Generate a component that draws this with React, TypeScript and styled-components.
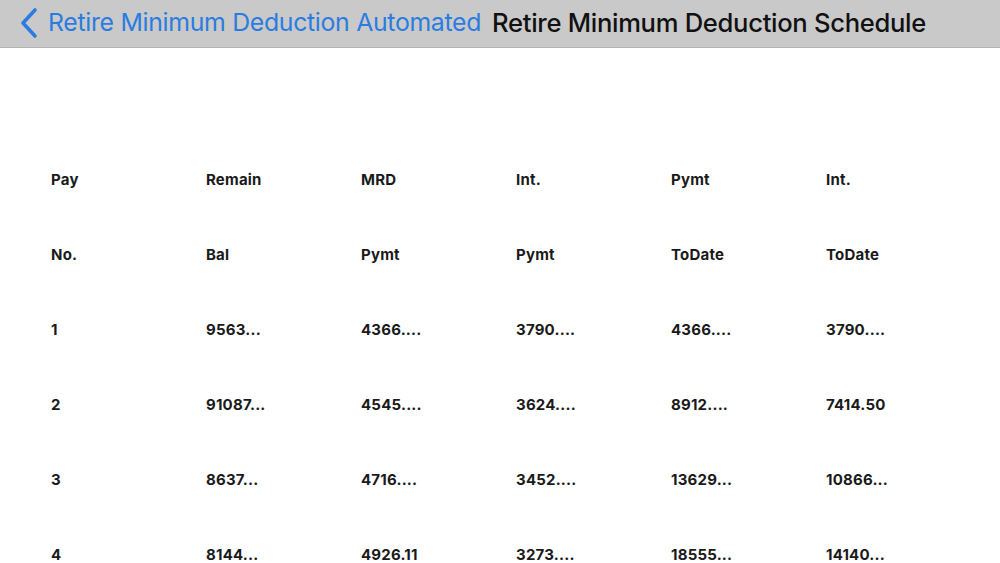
import React from "react";
import styled, { createGlobalStyle } from "styled-components";

const Global = createGlobalStyle`
  html, body { margin: 0; padding: 0; background: #ffffff; }
  body { font-family: Inter, "Noto Sans", sans-serif; width: 1000px; height: 563px; overflow: hidden; }
`;

const Page = styled.div`
  width: 1000px;
  height: 563px;
  display: flex;
  flex-direction: column;
  background: #ffffff;
  overflow: hidden;
`;

const NavBar = styled.header`
  height: 48px;
  flex: 0 0 48px;
  box-sizing: border-box;
  background: #c9c9c9;
  border-bottom: 1px solid #b4b4b4;
  display: flex;
  align-items: center;
  padding-left: 18px;
`;

const BackButton = styled.div`
  display: flex;
  align-items: center;
  gap: 8px;
  color: #2b7ce0;
  font-size: 24.8px;
  letter-spacing: -0.3px;
  line-height: 1;
  padding-bottom: 2px;
`;

const Title = styled.div`
  margin-left: 11px;
  color: #111111;
  font-size: 25.6px;
  font-weight: 500;
  letter-spacing: -0.3px;
  line-height: 1;
  padding-bottom: 2px;
`;

const Table = styled.div`
  display: grid;
  grid-template-columns: repeat(6, 155px);
  grid-auto-rows: 75px;
  padding: 94px 0 0 51px;
`;

const Cell = styled.div`
  display: flex;
  align-items: center;
  font-size: 15px;
  font-weight: 700;
  letter-spacing: 0.2px;
  color: #1a1a1a;
  white-space: nowrap;
`;

const header1 = ["Pay", "Remain", "MRD", "Int.", "Pymt", "Int."];
const header2 = ["No.", "Bal", "Pymt", "Pymt", "ToDate", "ToDate"];
const rows = [
  ["1", "9563...", "4366....", "3790....", "4366....", "3790...."],
  ["2", "91087...", "4545....", "3624....", "8912....", "7414.50"],
  ["3", "8637...", "4716....", "3452....", "13629...", "10866..."],
  ["4", "8144...", "4926.11", "3273....", "18555...", "14140..."],
];

export default function App() {
  const all = [header1, header2, ...rows];
  return (
    <Page>
      <Global />
      <NavBar>
        <BackButton>
          <svg width="22" height="32" viewBox="0 0 22 32" fill="none">
            <path d="M17 3 L5 16 L17 29" stroke="#2b7ce0" strokeWidth="3.6" strokeLinecap="round" strokeLinejoin="round" />
          </svg>
          <span>Retire Minimum Deduction Automated</span>
        </BackButton>
        <Title>Retire Minimum Deduction Schedule</Title>
      </NavBar>
      <Table>
        {all.map((r, i) => r.map((c, j) => <Cell key={`${i}-${j}`}>{c}</Cell>))}
      </Table>
    </Page>
  );
}
